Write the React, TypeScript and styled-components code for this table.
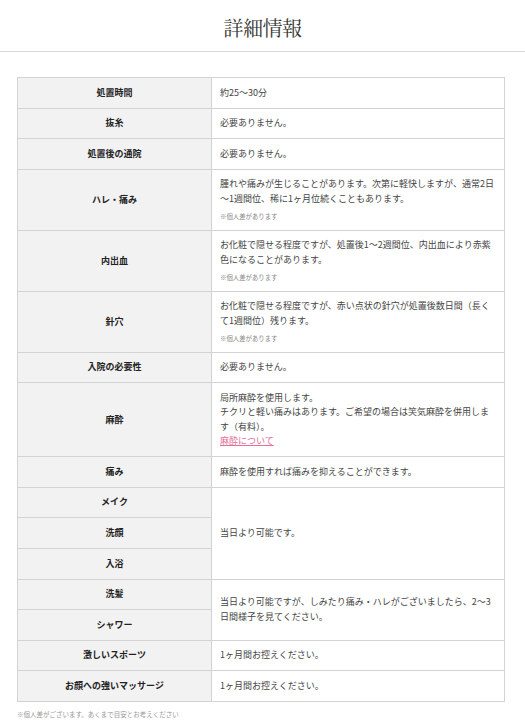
import React from "react";
import styled, { createGlobalStyle } from "styled-components";

const GlobalStyle = createGlobalStyle`
  html, body {
    margin: 0;
    padding: 0;
    background: #fff;
  }
  body {
    font-family: "Noto Sans CJK JP", "Noto Sans", sans-serif;
    color: #444;
  }
`;

const Header = styled.header`
  height: 51px;
  border-bottom: 1px solid #d8d8d8;
  display: flex;
  align-items: center;
  justify-content: center;
`;

const Title = styled.h1`
  margin: 0;
  padding-top: 3px;
  font-family: "Noto Serif CJK JP", "Liberation Serif", "Noto Sans CJK JP", serif;
  font-size: 20px;
  font-weight: 400;
  color: #333;
  letter-spacing: -0.5px;
`;

const Main = styled.main`
  padding: 25px 20px 0 17px;
`;

const Table = styled.table`
  width: 488px;
  border-collapse: collapse;
  table-layout: fixed;
  font-size: 9px;
  line-height: 14.4px;
`;

const Th = styled.th`
  width: 194px;
  box-sizing: border-box;
  background: #f2f2f2;
  border: 1px solid #d3d3d3;
  color: #222;
  font-weight: 700;
  text-align: center;
  vertical-align: middle;
  padding: 7.6px 8px;
`;

const Td = styled.td`
  border: 1px solid #d3d3d3;
  color: #444;
  text-align: left;
  vertical-align: middle;
  padding: 7.6px 8px;
  line-break: anywhere;
`;

const Note = styled.p`
  margin: 6px 0 0;
  font-size: 6.4px;
  line-height: 10px;
  color: #888;
`;

const Link = styled.a`
  color: #e2709a;
  text-decoration: underline;
`;

const Footnote = styled.p`
  margin: 7px 0 0;
  font-size: 6.5px;
  line-height: 10px;
  color: #999;
`;

type Row = {
  label: string;
  value?: React.ReactNode;
  span?: number;
  note?: boolean;
};

const rows: Row[] = [
  { label: "処置時間", value: "約25〜30分" },
  { label: "抜糸", value: "必要ありません。" },
  { label: "処置後の通院", value: "必要ありません。" },
  {
    label: "ハレ・痛み",
    value: "腫れや痛みが生じることがあります。次第に軽快しますが、通常2日〜1週間位、稀に1ヶ月位続くこともあります。",
    note: true,
  },
  {
    label: "内出血",
    value: "お化粧で隠せる程度ですが、処置後1〜2週間位、内出血により赤紫色になることがあります。",
    note: true,
  },
  {
    label: "針穴",
    value: "お化粧で隠せる程度ですが、赤い点状の針穴が処置後数日間（長くて1週間位）残ります。",
    note: true,
  },
  { label: "入院の必要性", value: "必要ありません。" },
  {
    label: "麻酔",
    value: (
      <>
        局所麻酔を使用します。
        <br />
        チクリと軽い痛みはあります。ご希望の場合は笑気麻酔を併用します（有料）。
        <br />
        <Link href="#">麻酔について</Link>
      </>
    ),
  },
  { label: "痛み", value: "麻酔を使用すれば痛みを抑えることができます。" },
  { label: "メイク", value: "当日より可能です。", span: 3 },
  { label: "洗顔" },
  { label: "入浴" },
  {
    label: "洗髪",
    value: "当日より可能ですが、しみたり痛み・ハレがございましたら、2〜3日間様子を見てください。",
    span: 2,
  },
  { label: "シャワー" },
  { label: "激しいスポーツ", value: "1ヶ月間お控えください。" },
  { label: "お顔への強いマッサージ", value: "1ヶ月間お控えください。" },
];

export default function App() {
  return (
    <>
      <GlobalStyle />
      <Header>
        <Title>詳細情報</Title>
      </Header>
      <Main>
        <Table>
          <tbody>
            {rows.map((r) => (
              <tr key={r.label}>
                <Th>{r.label}</Th>
                {r.value !== undefined && (
                  <Td rowSpan={r.span}>
                    {r.value}
                    {r.note && <Note>※個人差があります</Note>}
                  </Td>
                )}
              </tr>
            ))}
          </tbody>
        </Table>
        <Footnote>※個人差がございます。あくまで目安とお考えください</Footnote>
      </Main>
    </>
  );
}
